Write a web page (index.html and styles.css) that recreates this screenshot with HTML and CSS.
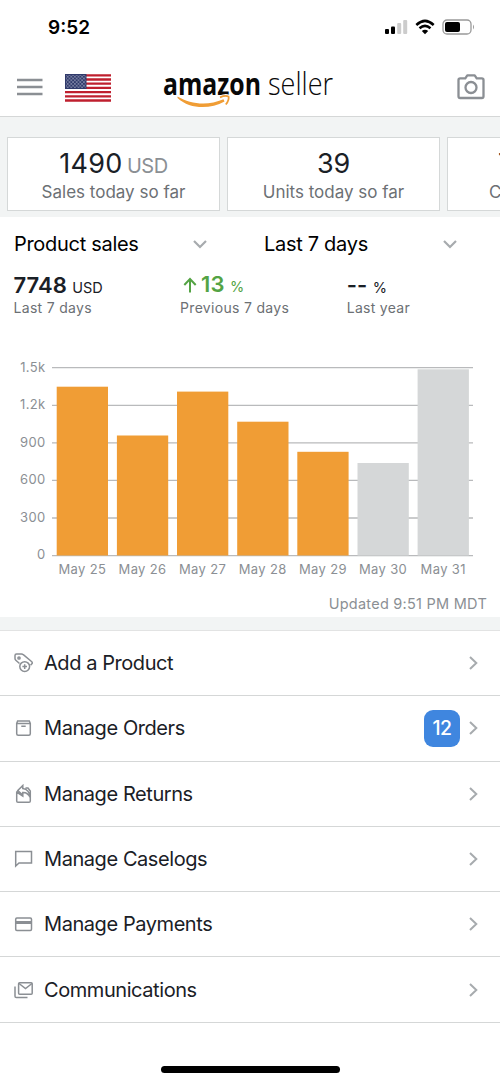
FILE: index.html
```html
<!DOCTYPE html>
<html lang="en">
<head>
<meta charset="utf-8">
<title>Amazon Seller</title>
<link rel="stylesheet" href="styles.css">
</head>
<body>
<div class="screen">
  <div class="status-bar">
    <span class="clock">9:52</span>
    <svg class="status-icons" width="92" height="18" viewBox="0 0 92 18">
      <g><rect x="1" y="10" width="4" height="5" rx="1"/><rect x="7" y="7.500" width="4" height="7.500" rx="1"/>
      <rect x="13.200" y="4" width="4" height="11" rx="1" fill="#ccc"/><rect x="19.200" y="1" width="4" height="14" rx="1" fill="#ccc"/></g>
      <g fill="none" stroke="#000" stroke-width="2.500"><path d="M32.300 6Q41 -2.200 49.700 6"/><path d="M35.500 9.300Q41 4.400 46.500 9.300"/></g>
      <path d="M37.800 12Q41 9.300 44.200 12L41 15.200Z"/>
      <rect x="59" y="1" width="28" height="14" rx="4" fill="none" stroke="#999" stroke-width="1.300"/>
      <rect x="61" y="3" width="15" height="10" rx="2"/><path d="M89 5.500Q91 8 89 10.500Z" fill="#999"/>
    </svg>
  </div>
  <header class="app-bar">
    <svg class="menu" width="26" height="18" viewBox="0 0 26 18"><path d="M0 2H25.500M0 9H25.500M0 16H25.500" stroke="#8b8f94" stroke-width="2.600"/></svg>
    <svg class="flag" width="46" height="28" viewBox="0 0 46 28">
      <defs><pattern id="stars" width="3.600" height="3.600" patternUnits="userSpaceOnUse"><circle cx=".9" cy=".9" r=".7" fill="#d8dcea"/><circle cx="2.700" cy="2.700" r=".7" fill="#d8dcea"/></pattern></defs>
      <rect width="46" height="28" fill="#fff"/>
      <path d="M0 1.300H46M0 5.500H46M0 9.700H46M0 13.900H46M0 18.100H46M0 22.300H46M0 26.500H46" stroke="#bf1f2e" stroke-width="2.300"/>
      <rect width="21.500" height="15" fill="#303a6b"/><rect x="1" y="1" width="19.500" height="13" fill="url(#stars)"/>
    </svg>
    <svg class="logo" width="172" height="42" viewBox="0 0 172 42">
      <text class="logo-bold" x="0" y="28" textLength="98" lengthAdjust="spacingAndGlyphs">amazon</text>
      <text class="logo-light" x="105" y="28" textLength="65" lengthAdjust="spacingAndGlyphs">seller</text>
      <path d="M14.500 29.500C28 37.500 45 39 60.500 32.300L61.500 34.500C47 42.500 27 42.500 14.500 31Z" fill="#f09d35"/>
      <path d="M57 30.300Q62.500 28 65.500 29.500Q66.500 33 62.800 37.500" fill="none" stroke="#fff" stroke-width="4"/>
      <path d="M57 30.300Q62.500 28 65.500 29.500Q66.500 33 62.800 37.500" fill="none" stroke="#f09d35" stroke-width="1.800"/>
    </svg>
    <svg class="camera" width="28" height="26" viewBox="0 0 28 26" fill="none" stroke="#8b8f94" stroke-width="2.300" stroke-linejoin="round"><path d="M3.200 4.300H8.300L10.300 1.300H17.700L19.700 4.300H24.800Q26.500 4.300 26.500 6V22.300Q26.500 24 24.800 24H3.200Q1.500 24 1.500 22.300V6Q1.500 4.300 3.200 4.300Z"/><circle cx="14" cy="13.500" r="5.500"/></svg>
  </header>

  <section class="cards">
    <div class="card"><div class="card-value"><span class="sales">1490</span> <span class="unit">USD</span></div><div class="card-label">Sales today so far</div></div>
    <div class="card"><div class="card-value">39</div><div class="card-label">Units today so far</div></div>
    <div class="card"><div class="card-value clipped">7</div><div class="card-label left">Current</div></div>
  </section>

  <section class="filters">
    <div class="filter"><span>Product sales</span><svg class="down" width="14" height="9" viewBox="0 0 14 9"><path d="M1 1L7 7L13 1"/></svg></div>
    <div class="filter"><span>Last 7 days</span><svg class="down" width="14" height="9" viewBox="0 0 14 9"><path d="M1 1L7 7L13 1"/></svg></div>
  </section>
  <section class="totals">
    <div class="total"><div class="amount">7748 <small>USD</small></div><div class="period">Last 7 days</div></div>
    <div class="total"><div class="amount up"><svg width="14" height="16" viewBox="0 0 14 16"><path d="M7 15.500V2M1.300 8L7 2L12.700 8" fill="none" stroke="#54a344" stroke-width="2"/></svg><span>13 <small>%</small></span></div><div class="period">Previous 7 days</div></div>
    <div class="total"><div class="amount">-- <small>%</small></div><div class="period">Last year</div></div>
  </section>

  <svg class="chart" width="500" height="230" viewBox="0 355 500 230">
    <path d="M52 367.700H473M52 405.300H473M52 442.800H473M52 480.400H473M52 518H473M52 555.600H473" stroke="#b9babc" stroke-width="1.300"/>
    <g fill="#f09d35"><rect x="56.700" y="386.700" width="51.300" height="168.800"/><rect x="116.900" y="435.500" width="51.300" height="120"/><rect x="177" y="391.600" width="51.300" height="163.900"/><rect x="237.200" y="421.700" width="51.300" height="133.800"/><rect x="297.300" y="451.800" width="51.300" height="103.700"/></g>
    <g fill="#d5d7d8"><rect x="357.500" y="463" width="51.300" height="92.500"/><rect x="417.600" y="369.300" width="51.300" height="186.200"/></g>
    <g class="axis" text-anchor="end"><text x="45.500" y="371.600">1.5k</text><text x="45.500" y="409">1.2k</text><text x="45.500" y="446.600">900</text><text x="45.500" y="484.400">600</text><text x="45.500" y="521.600">300</text><text x="45.500" y="559.400">0</text></g>
    <g class="axis" text-anchor="middle"><text x="82.300" y="574">May 25</text><text x="142.500" y="574">May 26</text><text x="202.600" y="574">May 27</text><text x="262.700" y="574">May 28</text><text x="322.900" y="574">May 29</text><text x="383" y="574">May 30</text><text x="443.200" y="574">May 31</text></g>
  </svg>
  <div class="updated">Updated 9:51 PM MDT</div>

  <nav class="list">
    <div class="row"><svg class="icon" viewBox="0 0 20 20"><path d="M5.500 10.500L1.800 7.200Q1 6.500 1 5.500V2.500Q1 1 2.500 1H7.500Q8.500 1 9.300 1.700L17.500 8.500Q19 9.700 17.700 11L16.500 12.200"/><circle cx="5" cy="5" r="1.100"/><circle cx="10.700" cy="13.600" r="4.900"/><path d="M10.700 11.300V15.900M8.400 13.600H13"/></svg><span>Add a Product</span><svg class="next" viewBox="0 0 9 14"><path d="M1 1L7.300 7L1 13"/></svg></div>
    <div class="row"><svg class="icon" viewBox="0 0 20 20"><path d="M2.700 5.400L3.600 3H15.300L16.300 5.400V15.700Q16.300 17.200 14.800 17.200H4.200Q2.700 17.200 2.700 15.700V5.400H16.300M7.300 8.200H11.700"/></svg><span>Manage Orders</span><b class="badge">12</b><svg class="next" viewBox="0 0 9 14"><path d="M1 1L7.300 7L1 13"/></svg></div>
    <div class="row"><svg class="icon" viewBox="0 0 20 20"><path d="M4.300 6.500L2.700 8V17Q2.700 18.300 4 18.300H15Q16.300 18.300 16.300 17V7L14 4H11.500M2.700 8L8.800 12V8.500Q13.300 8 16.200 13.500Q15.500 5.500 8.800 4.500V1.500L3.800 6.500L8.800 11"/></svg><span>Manage Returns</span><svg class="next" viewBox="0 0 9 14"><path d="M1 1L7.300 7L1 13"/></svg></div>
    <div class="row"><svg class="icon" viewBox="0 0 20 20"><path d="M1.700 2.500H17.500V14H5L1.700 17Z"/></svg><span>Manage Caselogs</span><svg class="next" viewBox="0 0 9 14"><path d="M1 1L7.300 7L1 13"/></svg></div>
    <div class="row"><svg class="icon" viewBox="0 0 20 20"><rect x="1.700" y="4" width="15.800" height="12.500" rx="1.200"/><path d="M2 8.500H17.500" stroke-width="3"/></svg><span>Manage Payments</span><svg class="next" viewBox="0 0 9 14"><path d="M1 1L7.300 7L1 13"/></svg></div>
    <div class="row"><svg class="icon" viewBox="0 0 20 20"><rect x="4.600" y="2.700" width="13.600" height="11.600" rx="1"/><path d="M5 3.500L11.500 8.500L18 3.500M1 6.500V16.200Q1 17.500 2.300 17.500H13.500"/></svg><span>Communications</span><svg class="next" viewBox="0 0 9 14"><path d="M1 1L7.300 7L1 13"/></svg></div>
  </nav>
  <footer class="home"><div class="home-bar"></div></footer>
</div>
</body>
</html>
```
FILE: styles.css
```css
* { box-sizing: border-box; }
body { margin: 0; background: #fff; font-family: Inter, "Liberation Sans", sans-serif; color: #1a2026; }
svg { display: block; flex: none; }
.screen { width: 500px; height: 1082px; display: flex; flex-direction: column; overflow: hidden; }
.status-bar { height: 56px; padding: 0 24px 2px 48px; display: flex; align-items: center; justify-content: space-between; color: #000; }
.clock { font-size: 19px; font-weight: 600; letter-spacing: 0; }
.status-icons { margin-top: 2px; }
.app-bar { height: 61px; border-bottom: 1px solid #d5d7d7; display: flex; align-items: center; padding-left: 17px; }
.menu { margin-top: 1px; }
.flag { margin-left: 22px; margin-top: 3px; }
.logo { margin-left: 52px; margin-top: 3px; overflow: visible; }
.logo-bold { font: 700 31px "Open Sans", sans-serif; fill: #080808; }
.logo-light { font: 300 31px "Open Sans", sans-serif; fill: #080808; }
.camera { margin-left: 122px; margin-top: 2px; }
.cards { height: 100px; background: #f2f4f4; padding: 20px 0 6px 7px; display: flex; gap: 7px; overflow: hidden; }
.card { flex: 0 0 213px; height: 74px; border: 1.5px solid #d5d8d8; background: #fff; text-align: center; padding-top: 8px; }
.card-value { height: 35px; font-size: 27px; line-height: 35px; letter-spacing: -.3px; white-space: nowrap; }
.sales { letter-spacing: .3px; }
.clipped { padding-left: 50px; text-align: left; }
.unit { color: #8b8f94; font-size: 20px; letter-spacing: -.4px; margin-left: -3px; }
.card-label { color: #6c7074; font-size: 17px; line-height: 22px; letter-spacing: 0; }
.left { text-align: left; padding-left: 41px; }
.filters { display: flex; height: 54px; }
.filter { width: 250px; padding: 0 43px 0 14px; display: flex; align-items: center; justify-content: space-between; font-size: 20px; letter-spacing: -.3px; color: #000; }
.down { fill: none; stroke: #a7abae; stroke-width: 2.2; }
.totals { display: flex; height: 84px; padding-left: 13.5px; }
.total { flex: 0 0 166.6px; }
.amount { height: 28px; font-size: 22px; line-height: 28px; font-weight: 600; white-space: nowrap; }
.amount small { font-size: 14.5px; font-weight: 400; }
.up { color: #54a344; display: flex; align-items: center; gap: 4px; padding-left: 3px; }
.period { color: #6c7074; font-size: 14px; line-height: 17px; letter-spacing: .3px; }
.chart { height: 230px; }
.axis { font-size: 13px; fill: #8b8f94; letter-spacing: .35px; }
.updated { height: 32px; padding: 10px 13px 0 0; text-align: right; color: #8b8f94; font-size: 14.5px; line-height: 18px; letter-spacing: .25px; white-space: nowrap; }
.list { border-top: 13px solid #f2f4f4; box-shadow: inset 0 1px #e2e3e3; padding-top: 1px; }
.row { height: 65.3px; border-bottom: 1.4px solid #d5d7d7; display: flex; align-items: center; padding: 0 22px 0 14px; font-size: 20px; letter-spacing: -.43px; }
.row span { margin-left: 10px; flex: 1; }
.icon { width: 20px; height: 20px; fill: none; stroke: #8b8f94; stroke-width: 1.5; }
.next { width: 9px; height: 14px; fill: none; stroke: #a7abae; stroke-width: 2; }
.badge { width: 36px; height: 37px; border-radius: 9px; background: #3f86df; color: #fff; font-size: 19.5px; font-weight: 500; display: grid; place-items: center; margin-right: 9px; }
.home { flex: 1; display: flex; justify-content: center; align-items: flex-end; padding-bottom: 9px; }
.home-bar { width: 179px; height: 7px; border-radius: 4px; background: #000; }
```
